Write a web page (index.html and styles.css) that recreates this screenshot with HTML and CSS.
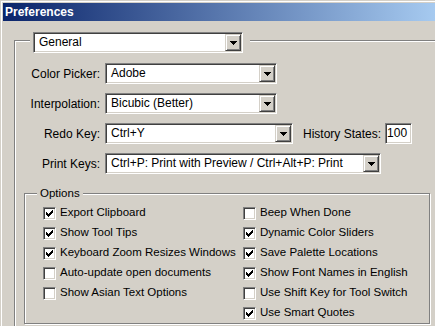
FILE: index.html
```html
<!DOCTYPE html>
<html lang="en">
<head>
    <meta charset="UTF-8">
    <title>Preferences</title>
    <link rel="stylesheet" href="styles.css">
</head>
<body>
    <div class="window">
        <div class="titlebar">Preferences</div>

        <div class="group group-main">
            <div class="group-head group-head-main">
                <div class="combo combo-general">
                    <span class="combo-value">General</span>
                    <span class="combo-btn"><svg width="7" height="4" viewBox="0 0 7 4"><path d="M0 0h7v1h-1v1h-1v1h-1v1h-1v-1h-1v-1h-1v-1h-1z"/></svg></span>
                </div>
            </div>

            <div class="settings">
                <span class="field-label">Color Picker:</span>
                <div class="field">
                    <div class="combo combo-short">
                        <span class="combo-value">Adobe</span>
                        <span class="combo-btn"><svg width="7" height="4" viewBox="0 0 7 4"><path d="M0 0h7v1h-1v1h-1v1h-1v1h-1v-1h-1v-1h-1v-1h-1z"/></svg></span>
                    </div>
                </div>

                <span class="field-label">Interpolation:</span>
                <div class="field">
                    <div class="combo combo-short">
                        <span class="combo-value">Bicubic (Better)</span>
                        <span class="combo-btn"><svg width="7" height="4" viewBox="0 0 7 4"><path d="M0 0h7v1h-1v1h-1v1h-1v1h-1v-1h-1v-1h-1v-1h-1z"/></svg></span>
                    </div>
                </div>

                <span class="field-label">Redo Key:</span>
                <div class="field">
                    <div class="combo combo-redo">
                        <span class="combo-value">Ctrl+Y</span>
                        <span class="combo-btn"><svg width="7" height="4" viewBox="0 0 7 4"><path d="M0 0h7v1h-1v1h-1v1h-1v1h-1v-1h-1v-1h-1v-1h-1z"/></svg></span>
                    </div>
                    <span class="history-label">History States:</span>
                    <span class="num-input">100</span>
                </div>

                <span class="field-label">Print Keys:</span>
                <div class="field">
                    <div class="combo combo-print">
                        <span class="combo-value">Ctrl+P: Print with Preview / Ctrl+Alt+P: Print</span>
                        <span class="combo-btn"><svg width="7" height="4" viewBox="0 0 7 4"><path d="M0 0h7v1h-1v1h-1v1h-1v1h-1v-1h-1v-1h-1v-1h-1z"/></svg></span>
                    </div>
                </div>
            </div>

            <div class="group group-options">
                <div class="group-head group-head-options">Options</div>
                <div class="options-grid">
                    <div class="options-col">
                        <div class="check-row"><span class="check-box"><svg width="7" height="7" viewBox="0 0 7 7"><path d="M0 2h1v3H0zM1 3h1v3H1zM2 4h1v3H2zM3 3h1v3H3zM4 2h1v3H4zM5 1h1v3H5zM6 0h1v3H6z"/></svg></span><span class="check-text">Export Clipboard</span></div>
                        <div class="check-row"><span class="check-box"><svg width="7" height="7" viewBox="0 0 7 7"><path d="M0 2h1v3H0zM1 3h1v3H1zM2 4h1v3H2zM3 3h1v3H3zM4 2h1v3H4zM5 1h1v3H5zM6 0h1v3H6z"/></svg></span><span class="check-text">Show Tool Tips</span></div>
                        <div class="check-row"><span class="check-box"><svg width="7" height="7" viewBox="0 0 7 7"><path d="M0 2h1v3H0zM1 3h1v3H1zM2 4h1v3H2zM3 3h1v3H3zM4 2h1v3H4zM5 1h1v3H5zM6 0h1v3H6z"/></svg></span><span class="check-text">Keyboard Zoom Resizes Windows</span></div>
                        <div class="check-row"><span class="check-box"></span><span class="check-text">Auto-update open documents</span></div>
                        <div class="check-row"><span class="check-box"></span><span class="check-text">Show Asian Text Options</span></div>
                    </div>
                    <div class="options-col">
                        <div class="check-row"><span class="check-box"></span><span class="check-text">Beep When Done</span></div>
                        <div class="check-row"><span class="check-box"><svg width="7" height="7" viewBox="0 0 7 7"><path d="M0 2h1v3H0zM1 3h1v3H1zM2 4h1v3H2zM3 3h1v3H3zM4 2h1v3H4zM5 1h1v3H5zM6 0h1v3H6z"/></svg></span><span class="check-text">Dynamic Color Sliders</span></div>
                        <div class="check-row"><span class="check-box"><svg width="7" height="7" viewBox="0 0 7 7"><path d="M0 2h1v3H0zM1 3h1v3H1zM2 4h1v3H2zM3 3h1v3H3zM4 2h1v3H4zM5 1h1v3H5zM6 0h1v3H6z"/></svg></span><span class="check-text">Save Palette Locations</span></div>
                        <div class="check-row"><span class="check-box"><svg width="7" height="7" viewBox="0 0 7 7"><path d="M0 2h1v3H0zM1 3h1v3H1zM2 4h1v3H2zM3 3h1v3H3zM4 2h1v3H4zM5 1h1v3H5zM6 0h1v3H6z"/></svg></span><span class="check-text">Show Font Names in English</span></div>
                        <div class="check-row"><span class="check-box"></span><span class="check-text">Use Shift Key for Tool Switch</span></div>
                        <div class="check-row"><span class="check-box"><svg width="7" height="7" viewBox="0 0 7 7"><path d="M0 2h1v3H0zM1 3h1v3H1zM2 4h1v3H2zM3 3h1v3H3zM4 2h1v3H4zM5 1h1v3H5zM6 0h1v3H6z"/></svg></span><span class="check-text">Use Smart Quotes</span></div>
                    </div>
                </div>
            </div>
        </div>
    </div>
</body>
</html>
```

FILE: styles.css
```css
/* General Styles */
body {
    margin: 0;
    background-color: #d4d0c8;
    font-family: "Liberation Sans", Arial, sans-serif;
    font-size: 12px;
    color: #000;
    overflow: hidden;
}

.window {
    height: 326px;
    box-sizing: border-box;
    border-top: 1px solid #d4d0c8;
    border-left: 1px solid #d4d0c8;
    box-shadow: inset 1px 1px #fff;
    padding: 2px 0 0 2px;
    overflow: hidden;
}

.titlebar {
    height: 18px;
    line-height: 18px;
    padding-left: 2px;
    background: linear-gradient(to right, #0a246a, #a6caf0);
    color: #fff;
    font-weight: bold;
}

/* Group boxes (etched frame) */
.group {
    border: 1px solid #808080;
    box-shadow: inset 1px 1px #fff, 1px 1px #fff;
}

.group-head {
    background-color: #d4d0c8;
    width: fit-content;
}

.group-main {
    margin: 19px 0 0 11px;
    width: 460px;
    padding-bottom: 30px;
}

.group-head-main {
    margin: -9px 0 0 15px;
    padding: 0 7px 0 3px;
}

/* Combo boxes */
.combo {
    display: flex;
    height: 21px;
    box-sizing: border-box;
    padding: 1px;
    border: 1px solid;
    border-color: #808080 #fff #fff #808080;
    box-shadow: inset 1px 1px #404040, inset -1px -1px #d4d0c8;
    background-color: #fff;
}

.combo-general { width: 210px; }
.combo-short { width: 172px; }
.combo-redo { width: 188px; }
.combo-print { width: 276px; }

.combo-value {
    flex: 1;
    padding-left: 4px;
    line-height: 17px;
    white-space: nowrap;
    overflow: hidden;
}

.combo-btn {
    flex: none;
    width: 16px;
    height: 17px;
    box-sizing: border-box;
    border: 1px solid;
    border-color: #d4d0c8 #404040 #404040 #d4d0c8;
    box-shadow: inset 1px 1px #fff, inset -1px -1px #808080;
    background-color: #d4d0c8;
    display: flex;
    align-items: center;
    justify-content: center;
}

.combo-btn svg {
    shape-rendering: crispEdges;
}

/* Settings rows */
.settings {
    display: grid;
    grid-template-columns: 85px auto;
    grid-auto-rows: 21px;
    column-gap: 5px;
    row-gap: 9px;
    margin-top: 10px;
}

.field-label {
    text-align: right;
    line-height: 20px;
    padding-top: 1px;
    white-space: nowrap;
}

.field {
    display: flex;
    align-items: center;
}

.history-label {
    margin-left: 10px;
    padding-top: 1px;
}

.num-input {
    margin-left: 4px;
    width: 27px;
    height: 21px;
    box-sizing: border-box;
    padding-left: 1px;
    line-height: 19px;
    border: 1px solid;
    border-color: #808080 #fff #fff #808080;
    box-shadow: inset 1px 1px #404040, inset -1px -1px #d4d0c8;
    background-color: #fff;
}

/* Options */
.group-options {
    margin: 19px 0 0 9px;
    width: 406px;
    box-sizing: border-box;
    font-size: 11.5px;
}

.group-head-options {
    margin: -8px 0 0 12px;
    padding: 0 3px;
    line-height: 14px;
}

.options-grid {
    display: grid;
    grid-template-columns: 200px 1fr;
    margin-top: 3px;
    padding-left: 18px;
}

.check-row {
    display: flex;
    height: 20px;
}

.check-box {
    flex: none;
    width: 13px;
    height: 13px;
    box-sizing: border-box;
    margin-top: 4px;
    padding: 2px;
    border: 1px solid;
    border-color: #808080 #fff #fff #808080;
    box-shadow: inset 1px 1px #404040, inset -1px -1px #d4d0c8;
    background-color: #fff;
}

.check-box svg {
    display: block;
    shape-rendering: crispEdges;
}

.check-text {
    margin-left: 4px;
    line-height: 18px;
    white-space: nowrap;
}
```
